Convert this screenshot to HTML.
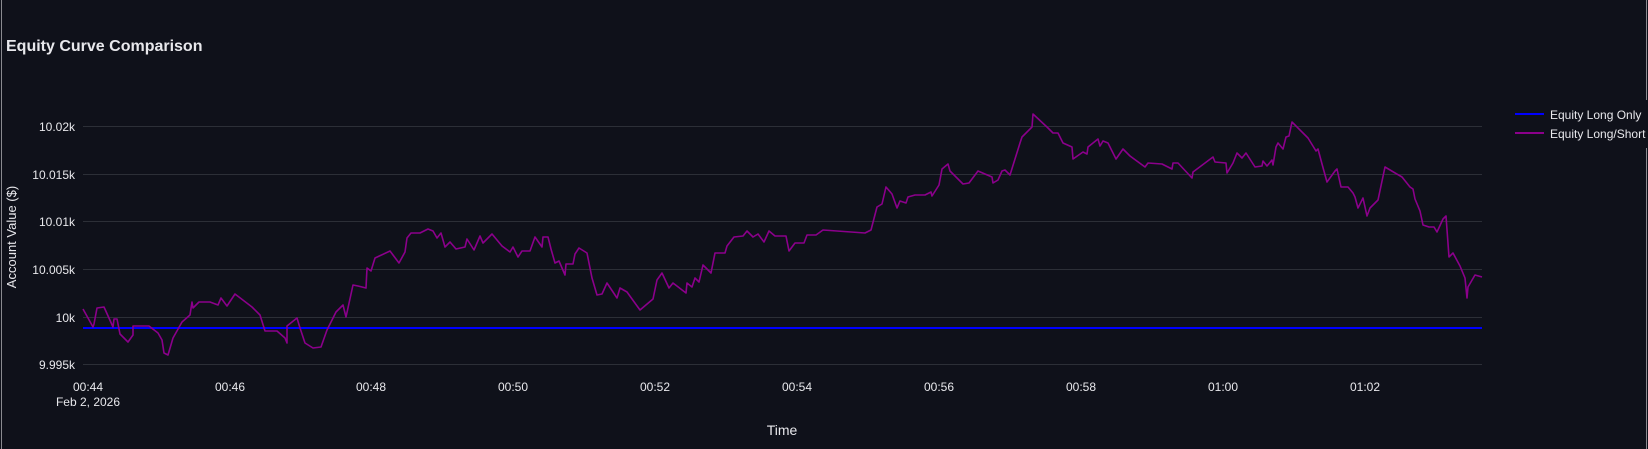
<!DOCTYPE html>
<html><head><meta charset="utf-8"><style>
html,body{margin:0;padding:0;background:#0f111a;}
svg{display:block;}
text{font-family:"Liberation Sans",Arial,sans-serif;fill:#e8e8ec;}
</style></head><body>
<svg width="1648" height="449" viewBox="0 0 1648 449" xmlns="http://www.w3.org/2000/svg">
<rect width="1648" height="449" fill="#0f111a"/>
<line x1="1.5" y1="0" x2="1.5" y2="449" stroke="#8a8a90" stroke-width="1"/>
<line x1="1646.5" y1="0" x2="1646.5" y2="100" stroke="#8a8a90" stroke-width="1"/>
<line x1="1646.5" y1="148" x2="1646.5" y2="449" stroke="#8a8a90" stroke-width="1"/>
<text x="6" y="51" font-size="16" font-weight="bold" fill="#fff">Equity Curve Comparison</text>
<g stroke="#2c2f37" stroke-width="1">
<line x1="83" y1="126.5" x2="1482" y2="126.5"/>
<line x1="83" y1="174.5" x2="1482" y2="174.5"/>
<line x1="83" y1="221.5" x2="1482" y2="221.5"/>
<line x1="83" y1="269.5" x2="1482" y2="269.5"/>
<line x1="83" y1="317.5" x2="1482" y2="317.5"/>
<line x1="83" y1="364.5" x2="1482" y2="364.5"/>
</g>
<g font-size="12" text-anchor="end">
<text x="75" y="131">10.02k</text>
<text x="75" y="179">10.015k</text>
<text x="75" y="226">10.01k</text>
<text x="75" y="274">10.005k</text>
<text x="75" y="322">10k</text>
<text x="75" y="369">9.995k</text>
</g>
<text transform="translate(16,237) rotate(-90)" font-size="13" text-anchor="middle">Account Value ($)</text>
<g font-size="12" text-anchor="middle">
<text x="88" y="391">00:44</text>
<text x="230" y="391">00:46</text>
<text x="371" y="391">00:48</text>
<text x="513" y="391">00:50</text>
<text x="655" y="391">00:52</text>
<text x="797" y="391">00:54</text>
<text x="939" y="391">00:56</text>
<text x="1081" y="391">00:58</text>
<text x="1223" y="391">01:00</text>
<text x="1365" y="391">01:02</text>
<text x="88" y="406">Feb 2, 2026</text>
</g>
<text x="782" y="435" font-size="14" text-anchor="middle">Time</text>
<line x1="83" y1="328" x2="1482" y2="328" stroke="#0000ff" stroke-width="2"/>
<polyline fill="none" stroke="#8b008b" stroke-width="1.6" stroke-linejoin="round" points="83,309 93,327 94,324 97,308 104,307 113,327 114,319 117,319 120,334 124,338 128,342 133,335 133,326 149,326 158,333 162,340 164,353 168,355 173,338 182,322 190,315 192,302 193,308 199,302 210,302 218,305 221,298 227,306 235,294 252,307 260,315 265,331 277,331 285,338 287,343 287,326 297,318 300,328 305,343 313,348 321,347 327,330 336,312 343,305 346,317 353,285 358,286 366,288 367,268 371,271 375,258 390,251 399,263 405,252 407,238 411,233 420,233 428,229 433,231 437,238 441,233 445,247 450,242 456,249 465,247 467,239 474,250 480,236 483,243 492,234 502,246 510,252 513,247 518,257 522,251 530,251 535,237 542,247 543,237 548,237 551,249 555,263 559,261 565,275 566,264 573,264 575,254 579,248 587,253 592,278 597,295 602,294 607,283 611,289 617,298 620,288 627,292 640,310 653,299 657,280 662,273 669,288 673,283 686,293 687,283 692,287 695,278 699,282 703,265 711,273 715,253 725,253 727,246 734,237 743,236 747,231 753,237 758,234 764,242 769,231 775,236 786,236 789,251 795,243 804,243 807,235 816,235 823,230 865,233 871,230 877,207 882,204 886,187 892,194 897,208 900,201 906,203 908,197 915,195 925,195 931,192 932,196 939,185 942,169 948,164 950,171 963,184 969,183 978,171 992,177 993,183 998,180 1002,171 1005,170 1010,175 1020,143 1022,137 1032,127 1033,114 1048,128 1053,133 1058,133 1063,143 1072,147 1073,159 1083,152 1087,154 1088,147 1098,139 1100,146 1103,141 1108,143 1113,153 1116,159 1123,149 1130,156 1145,167 1148,163 1162,164 1172,169 1173,163 1178,163 1192,178 1193,172 1213,157 1215,162 1226,163 1227,173 1233,163 1237,153 1242,158 1246,153 1255,167 1262,166 1263,161 1267,166 1272,160 1273,165 1276,147 1278,143 1283,149 1286,137 1289,136 1292,122 1308,138 1316,151 1318,149 1322,164 1327,182 1335,171 1337,169 1341,187 1348,187 1353,193 1355,197 1358,208 1363,198 1367,216 1370,208 1378,200 1385,167 1402,177 1410,187 1413,189 1415,199 1420,211 1423,225 1429,227 1434,227 1437,232 1443,219 1446,216 1449,257 1453,253 1460,266 1465,278 1467,298 1468,287 1475,275 1482,277"/>
<line x1="1515" y1="114" x2="1544" y2="114" stroke="#0000ff" stroke-width="2"/>
<text x="1550" y="119" font-size="12">Equity Long Only</text>
<line x1="1515" y1="133" x2="1544" y2="133" stroke="#8b008b" stroke-width="2"/>
<text x="1550" y="138" font-size="12">Equity Long/Short</text>
</svg>
</body></html>
